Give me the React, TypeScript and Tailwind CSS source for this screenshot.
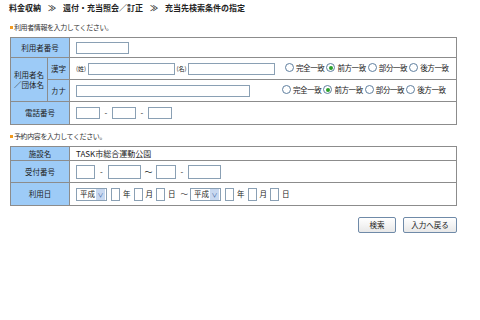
const FONT = { fontFamily: '"Noto Sans CJK JP", "Liberation Sans", sans-serif' };

function Box({ w, h = 12 }: { w: number; h?: number }) {
  return (
    <span
      className="inline-block border border-[#8aa0b4] bg-white align-middle shrink-0"
      style={{ width: w, height: h }}
    />
  );
}

function Radio({ label, checked }: { label: string; checked?: boolean }) {
  return (
    <span className="inline-flex items-center gap-[2px] mr-[2px] whitespace-nowrap">
      <span className="w-[9px] h-[9px] rounded-full border border-[#5f7f9f] bg-white flex items-center justify-center">
        {checked && <span className="w-[4px] h-[4px] rounded-full bg-[#2aa02a]" />}
      </span>
      <span className="text-[7.5px] tracking-[-0.4px]">{label}</span>
    </span>
  );
}

function Radios() {
  return (
    <span className="inline-flex items-center whitespace-nowrap">
      <Radio label="完全一致" />
      <Radio label="前方一致" checked />
      <Radio label="部分一致" />
      <Radio label="後方一致" />
    </span>
  );
}

function Select() {
  return (
    <span className="inline-flex items-center h-[13px] w-[31px] border border-[#8aa0b4] bg-white align-middle shrink-0">
      <span className="flex-1 pl-[3px] text-[7.5px] leading-none">平成</span>
      <span className="w-[9px] h-[11px] mr-[1px] bg-[#c8d8f0] text-[#3a5fa0] text-[6px] flex items-center justify-center">∨</span>
    </span>
  );
}

function SubHead({ children }: { children: React.ReactNode }) {
  return (
    <div className="flex items-center h-[14px] text-[7px] tracking-[-0.4px] text-[#333]">
      <span className="w-[3px] h-[3px] bg-[#f29a1f] mr-[1px]" />
      {children}
    </div>
  );
}

const lab = "bg-[#9dcbf7] border border-[#8c8c8c] text-center text-[#222] text-[7.5px] p-0";
const cell = "border border-[#8c8c8c] bg-white p-0 pl-[6px] text-[8px]";

export default function App() {
  return (
    <div className="w-[480px] h-[320px] bg-white text-[#222] overflow-hidden" style={FONT}>
      <div className="pl-[9px] pt-[2px] h-[14px] text-[8px] font-bold text-[#222] whitespace-nowrap">
        料金収納<span className="mx-[7px]">≫</span>還付・充当照会／訂正<span className="mx-[7px]">≫</span>充当先検索条件の指定
      </div>
      <div className="pl-[10px] pt-[6px]">
        <SubHead>利用者情報を入力してください。</SubHead>
        <table className="border-collapse w-[447px] mt-[3px]">
          <colgroup>
            <col className="w-[37px]" />
            <col className="w-[22px]" />
            <col />
          </colgroup>
          <tbody>
            <tr className="h-[20px]">
              <td colSpan={2} className={lab}>利用者番号</td>
              <td className={cell}><Box w={53} /></td>
            </tr>
            <tr className="h-[22px]">
              <td rowSpan={2} className={lab + " leading-[10px]"}>利用者名<br />／団体名</td>
              <td className={lab}>漢字</td>
              <td className={cell + " pl-[3px]"}>
                <div className="flex items-center">
                  <span className="text-[6px] w-[12px]">(姓)</span>
                  <Box w={87} />
                  <span className="text-[6px] w-[13px] text-center">(名)</span>
                  <Box w={87} />
                  <span className="ml-[10px]"><Radios /></span>
                </div>
              </td>
            </tr>
            <tr className="h-[22px]">
              <td className={lab}>カナ</td>
              <td className={cell}>
                <div className="flex items-center">
                  <Box w={174} />
                  <span className="ml-[32px]"><Radios /></span>
                </div>
              </td>
            </tr>
            <tr className="h-[23px]">
              <td colSpan={2} className={lab}>電話番号</td>
              <td className={cell}>
                <div className="flex items-center">
                  <Box w={24} />
                  <span className="w-[12px] text-center">-</span>
                  <Box w={24} />
                  <span className="w-[12px] text-center">-</span>
                  <Box w={24} />
                </div>
              </td>
            </tr>
          </tbody>
        </table>

        <div className="mt-[4px]">
          <SubHead>予約内容を入力してください。</SubHead>
        </div>
        <table className="border-collapse w-[447px] mt-[3px]">
          <colgroup>
            <col className="w-[59px]" />
            <col />
          </colgroup>
          <tbody>
            <tr className="h-[14px]">
              <td className={lab}>施設名</td>
              <td className={cell + " text-[8.5px] leading-[12px]"}>TASK市総合運動公園</td>
            </tr>
            <tr className="h-[22px]">
              <td className={lab}>受付番号</td>
              <td className={cell}>
                <div className="flex items-center">
                  <Box w={19} h={14} />
                  <span className="w-[13px] text-center">-</span>
                  <Box w={33} h={14} />
                  <span className="w-[15px] text-center">～</span>
                  <Box w={20} h={14} />
                  <span className="w-[12px] text-center">-</span>
                  <Box w={33} h={14} />
                </div>
              </td>
            </tr>
            <tr className="h-[23px]">
              <td className={lab}>利用日</td>
              <td className={cell}>
                <div className="flex items-center text-[7.5px]">
                  <Select />
                  <span className="ml-[4px]"><Box w={9} h={13} /></span>
                  <span className="mx-[3px]">年</span>
                  <Box w={9} h={13} />
                  <span className="mx-[3px]">月</span>
                  <Box w={9} h={13} />
                  <span className="mx-[3px]">日</span>
                  <span className="mx-[2px]">～</span>
                  <Select />
                  <span className="ml-[4px]"><Box w={9} h={13} /></span>
                  <span className="mx-[3px]">年</span>
                  <Box w={9} h={13} />
                  <span className="mx-[3px]">月</span>
                  <Box w={9} h={13} />
                  <span className="mx-[3px]">日</span>
                </div>
              </td>
            </tr>
          </tbody>
        </table>

        <div className="flex justify-end w-[447px] mt-[11px] gap-[7px]">
          <button className="w-[38px] h-[16px] border border-[#6f8aa8] rounded-[2px] bg-gradient-to-b from-white to-[#e8e8e8] text-[7.5px] leading-none">検索</button>
          <button className="w-[54px] h-[16px] border border-[#6f8aa8] rounded-[2px] bg-gradient-to-b from-white to-[#e8e8e8] text-[7.5px] leading-none">入力へ戻る</button>
        </div>
      </div>
    </div>
  );
}
